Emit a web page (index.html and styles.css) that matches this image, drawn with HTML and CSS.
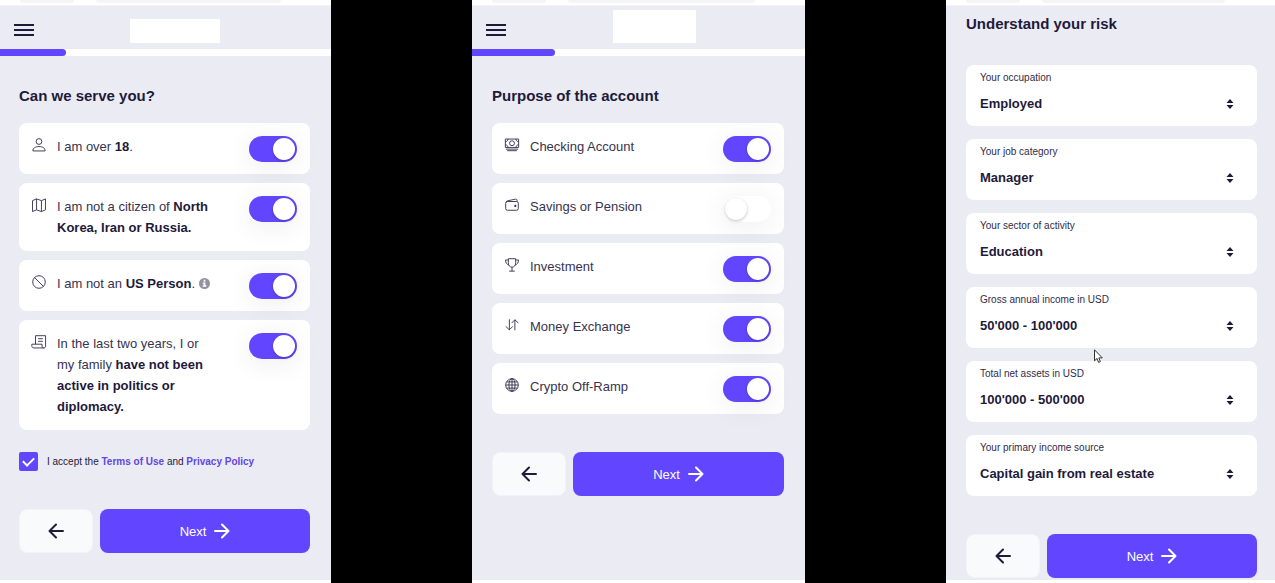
FILE: index.html
```html
<!DOCTYPE html>
<html lang="en">
<head>
  <meta charset="UTF-8">
  <title>Account onboarding</title>
  <link rel="stylesheet" href="styles.css">
</head>
<body>
  <!-- shared icons -->
  <svg class="sprite" aria-hidden="true">
    <symbol id="arrow-left" viewBox="0 0 16 16"><path d="M15 8H1.500M8 1.500 1.500 8 8 14.500"/></symbol>
    <symbol id="arrow-right" viewBox="0 0 16 16"><path d="M1 8h13.500M8 1.500 14.500 8 8 14.500"/></symbol>
    <symbol id="menu" viewBox="0 0 20 14"><path d="M0 2h20M0 7h20M0 12h20"/></symbol>
    <symbol id="sort" viewBox="0 0 8 10"><path d="M4 0 7.500 4H.5zM4 10 .5 6h7z"/></symbol>
  </svg>

  <div class="screens">
    <form class="screen" id="eligibility">
      <div class="browser-bar"><span class="tab"></span><span class="address"></span></div>
      <header class="header">
        <button type="button" class="menu" aria-label="Menu"><svg><use href="#menu"/></svg></button>
        <div class="logo"></div>
      </header>
      <div class="progress"><div class="progress-bar" style="width: 20%"></div></div>

      <main class="content">
        <h2>Can we serve you?</h2>
        <div class="options">
          <div class="option">
            <svg class="icon" viewBox="0 0 16 16"><circle cx="8" cy="4" r="3.300"/><path d="M1 14.800c0-3.500 3-5 7-5s7 1.500 7 5z"/></svg>
            <label for="over18">I am over <b>18</b>.</label>
            <input type="checkbox" class="toggle" id="over18" checked>
          </div>
          <div class="option">
            <svg class="icon" viewBox="0 0 16 16"><path d="M.6 3 5.200 1l5.600 2 4.600-2v12.500l-4.600 2-5.600-2-4.600 2zM5.200 1v12.500M10.800 3v12.500"/></svg>
            <label for="citizen">I am not a citizen of <b>North Korea, Iran or Russia.</b></label>
            <input type="checkbox" class="toggle" id="citizen" checked>
          </div>
          <div class="option">
            <svg class="icon" viewBox="0 0 16 16"><circle cx="8" cy="8" r="7.200"/><path d="m3 3 10 10"/></svg>
            <label for="usPerson">I am not an <b>US Person</b>.
              <svg class="info" viewBox="0 0 12 12"><circle cx="6" cy="6" r="6"/><path d="M5 2h2v2H5zM4 5h3v3h1v1.500H4V8h1V6.300H4z"/></svg>
            </label>
            <input type="checkbox" class="toggle" id="usPerson" checked>
          </div>
          <div class="option">
            <svg class="icon" viewBox="0 0 16 16"><path d="M4 10.500V.8h11.500v12c0 1.300-.9 2-2 2s-2-.7-2-2v-2.300H-.2v1.800c0 1.500.9 2.500 2.300 2.500h11.400M7 4.200h5.500M7 7.200h5.500"/></svg>
            <label for="politics">In the last two years, I or my family <b>have not been active in politics or diplomacy.</b></label>
            <input type="checkbox" class="toggle" id="politics" checked>
          </div>
        </div>

        <div class="terms">
          <input type="checkbox" id="accept" checked>
          <label for="accept">I accept the <a href="#terms">Terms of Use</a> and <a href="#privacy">Privacy Policy</a></label>
        </div>

        <div class="actions">
          <button type="button" class="back" aria-label="Back"><svg><use href="#arrow-left"/></svg></button>
          <button type="submit" class="next">Next <svg><use href="#arrow-right"/></svg></button>
        </div>
      </main>
    </form>

    <form class="screen" id="purpose">
      <div class="browser-bar"><span class="tab"></span><span class="address"></span></div>
      <header class="header">
        <button type="button" class="menu" aria-label="Menu"><svg><use href="#menu"/></svg></button>
        <div class="logo logo-tall"></div>
      </header>
      <div class="progress"><div class="progress-bar" style="width: 25%"></div></div>

      <main class="content">
        <h2>Purpose of the account</h2>
        <div class="options">
          <div class="option">
            <svg class="icon" viewBox="0 0 16 16"><path d="M.4 1.200h15.200v9.600H.4zM1 12.700h14M2.500 14.500h11"/><circle cx="8" cy="6" r="2.800"/><path d="M.4 4.200c1.800 0 3-1.200 3-3M15.600 4.200c-1.800 0-3-1.200-3-3M.4 7.800c1.800 0 3 1.200 3 3M15.600 7.800c-1.800 0-3 1.200-3 3"/></svg>
            <label for="checking">Checking Account</label>
            <input type="checkbox" class="toggle" id="checking" checked>
          </div>
          <div class="option">
            <svg class="icon" viewBox="0 0 16 16"><rect x=".8" y="4" width="14.400" height="10" rx="2"/><path d="M1 5c.3-1 1-1.500 2-1.800l9-1.900c1-.2 1.800.4 1.800 1.400V4"/><circle class="dot" cx="11.800" cy="9" r="1.200"/></svg>
            <label for="savings">Savings or Pension</label>
            <input type="checkbox" class="toggle" id="savings">
          </div>
          <div class="option">
            <svg class="icon" viewBox="0 0 16 16"><path d="M3.800.8h8.400v4.700c0 3-1.800 5-4.200 5s-4.200-2-4.200-5zM3.800 2.300H.6c0 3 1.200 5 3.900 5.500M12.200 2.300h3.200c0 3-1.200 5-3.900 5.500M8 10.500V15M4.800 15h6.400"/></svg>
            <label for="investment">Investment</label>
            <input type="checkbox" class="toggle" id="investment" checked>
          </div>
          <div class="option">
            <svg class="icon" viewBox="0 0 16 16"><path d="M5 1.500v12M.8 9.500 5 13.500l4-4M11.300 14V2M7.500 5.800 11.300 2l4 3.800"/></svg>
            <label for="exchange">Money Exchange</label>
            <input type="checkbox" class="toggle" id="exchange" checked>
          </div>
          <div class="option">
            <svg class="icon" viewBox="0 0 16 16"><circle cx="8" cy="8" r="7.200"/><ellipse cx="8" cy="8" rx="3.500" ry="7.200"/><path d="M8 .8v14.400M.8 8h14.400M1.800 4.500h12.400M1.800 11.500h12.400"/></svg>
            <label for="crypto">Crypto Off-Ramp</label>
            <input type="checkbox" class="toggle" id="crypto" checked>
          </div>
        </div>

        <div class="actions">
          <button type="button" class="back" aria-label="Back"><svg><use href="#arrow-left"/></svg></button>
          <button type="submit" class="next">Next <svg><use href="#arrow-right"/></svg></button>
        </div>
      </main>
    </form>

    <form class="screen" id="risk">
      <div class="browser-bar"><span class="tab"></span><span class="address"></span></div>
      <main class="content content-scrolled">
        <h2>Understand your risk</h2>
        <div class="fields">
          <div class="field">
            <label for="occupation">Your occupation</label>
            <select id="occupation"><option>Employed</option></select>
            <svg class="sort"><use href="#sort"/></svg>
          </div>
          <div class="field">
            <label for="category">Your job category</label>
            <select id="category"><option>Manager</option></select>
            <svg class="sort"><use href="#sort"/></svg>
          </div>
          <div class="field">
            <label for="sector">Your sector of activity</label>
            <select id="sector"><option>Education</option></select>
            <svg class="sort"><use href="#sort"/></svg>
          </div>
          <div class="field">
            <label for="income">Gross annual income in USD</label>
            <select id="income"><option>50'000 - 100'000</option></select>
            <svg class="sort"><use href="#sort"/></svg>
            <svg class="cursor" viewBox="0 0 9 14"><path d="M.5.8v11l2.500-2.300 1.600 3.900 1.800-.8-1.600-3.700h3.500z"/></svg>
          </div>
          <div class="field">
            <label for="assets">Total net assets in USD</label>
            <select id="assets"><option>100'000 - 500'000</option></select>
            <svg class="sort"><use href="#sort"/></svg>
          </div>
          <div class="field">
            <label for="source">Your primary income source</label>
            <select id="source"><option>Capital gain from real estate</option></select>
            <svg class="sort"><use href="#sort"/></svg>
          </div>
        </div>

        <div class="actions">
          <button type="button" class="back" aria-label="Back"><svg><use href="#arrow-left"/></svg></button>
          <button type="submit" class="next">Next <svg><use href="#arrow-right"/></svg></button>
        </div>
      </main>
    </form>
  </div>
</body>
</html>
```
FILE: styles.css
```css
* {
  box-sizing: border-box;
}
body {
  margin: 0;
  background: #000;
  color: #1e1a3a;
  font-family: "Liberation Sans", Arial, sans-serif;
  font-size: 13px;
}
button, input, select {
  margin: 0;
  padding: 0;
  border: none;
  color: inherit;
  font: inherit;
}
svg {
  display: block;
  fill: none;
  stroke: currentColor;
}
.sprite {
  position: absolute;
  width: 0;
  height: 0;
}
.screens {
  display: grid;
  grid-template-columns: 331fr 333fr 329fr;
  column-gap: 141px;
  min-height: 100vh;
}
.screen {
  background: #ebebf4;
  border-bottom: 3px solid #fff;
}

/* bottom edge of the phone browser */
.browser-bar {
  display: flex;
  gap: 22px;
  height: 6px;
  padding: 0 50px 0 20px;
  background: #fff;
  border-bottom: 1px solid #f4f4f8;
}
.tab, .address {
  height: 3px;
  background: #f5f5f7;
  border-radius: 0 0 6px 6px;
}
.tab {
  width: 54px;
}
.address {
  flex: 1;
}

.header {
  display: flex;
  align-items: flex-end;
  height: 43px;
  padding: 0 14px 6px;
}
.menu {
  display: flex;
  align-items: center;
  height: 27px;
  background: none;
  cursor: pointer;
}
.menu svg {
  width: 20px;
  height: 14px;
  stroke-width: 2;
}
.logo {
  width: 90px;
  height: 24px;
  margin-left: 96px;
  background: #fff;
}
.logo-tall {
  width: 83px;
  height: 33px;
  margin-left: 107px;
}
.progress {
  height: 7px;
  background: #fff;
}
.progress-bar {
  height: 7px;
  background: #6246ff;
  border-radius: 0 4px 4px 0;
}

.content {
  padding: 30px 21px 0 19px;
}
#purpose .content {
  padding-left: 20px;
}
h2 {
  margin: 0 0 17px;
  font-size: 15px;
  line-height: 20px;
}
.options {
  display: flex;
  flex-direction: column;
  gap: 9px;
}
.option {
  display: flex;
  align-items: flex-start;
  padding: 13px 13px 12px;
  background: #fff;
  border-radius: 8px;
}
.icon {
  flex: none;
  width: 14px;
  height: 14px;
  margin: 2px 11px 0 0;
  overflow: visible;
  color: #2c2846;
}
.icon .dot {
  fill: currentColor;
  stroke: none;
}
.option label {
  flex: 1;
  margin-right: 33px;
  padding-bottom: 1px;
  line-height: 21px;
  color: #37334f;
}
.option b {
  color: #1e1a3a;
}
.info {
  display: inline-block;
  width: 11px;
  height: 11px;
  vertical-align: -1px;
  stroke: none;
}
.info circle {
  fill: #93919f;
}
.info path {
  fill: #fff;
}

.toggle {
  flex: none;
  appearance: none;
  width: 48px;
  height: 26px;
  padding: 2px;
  background: #fff;
  border-radius: 13px;
  box-shadow: 0 4px 28px rgba(30, 30, 30, 0.08);
  cursor: pointer;
}
.toggle::before {
  content: "";
  display: block;
  width: 22px;
  height: 22px;
  background: #fff;
  border-radius: 50%;
  box-shadow: 0 1px 3px rgba(0, 0, 0, 0.25);
}
.toggle:checked {
  background: #6246ff;
}
.toggle:checked::before {
  margin-left: auto;
}

.terms {
  display: flex;
  align-items: center;
  gap: 9px;
  margin-top: 22px;
  font-size: 10px;
}
.terms input {
  display: grid;
  place-items: center;
  appearance: none;
  width: 19px;
  height: 19px;
  background: #6246ff;
  border-radius: 2px;
}
.terms input:checked::before {
  content: "";
  width: 9px;
  height: 5px;
  margin-bottom: 3px;
  border: solid #fff;
  border-width: 0 0 2px 2px;
  rotate: -45deg;
}
.terms a {
  color: #6246e0;
  font-weight: bold;
  text-decoration: none;
}

.actions {
  display: flex;
  gap: 7px;
  margin-top: 38px;
}
.actions button {
  display: flex;
  align-items: center;
  justify-content: center;
  gap: 8px;
  height: 44px;
  border-radius: 8px;
  cursor: pointer;
}
.actions svg {
  width: 16px;
  height: 16px;
  stroke-width: 2;
  stroke-linecap: round;
  stroke-linejoin: round;
}
.actions .back {
  width: 74px;
  background: #f9fafb;
  border: 1px solid #f2f2f7;
}
.actions .next {
  flex: 1;
  background: #6246ff;
  color: #fff;
}

.content-scrolled {
  padding: 8px 18px 0 20px;
}
.content-scrolled h2 {
  margin-bottom: 31px;
}
.fields {
  display: flex;
  flex-direction: column;
  gap: 13px;
}
.field {
  position: relative;
  display: grid;
  align-items: center;
  height: 61px;
  padding: 5px 0 3px;
  grid-template-rows: 14px 1fr;
  background: #fff;
  border-radius: 8px;
}
.field label {
  padding-left: 14px;
  font-size: 10px;
  color: #302c4a;
}
.field select {
  grid-area: 2 / 1;
  appearance: none;
  width: 100%;
  height: 32px;
  padding: 0 40px 0 14px;
  background: none;
  font-weight: bold;
}
.sort {
  grid-area: 2 / 1;
  justify-self: end;
  width: 8px;
  height: 10px;
  margin-right: 23px;
  fill: currentColor;
  stroke: none;
  pointer-events: none;
}
.cursor {
  position: absolute;
  left: 128px;
  top: 62px;
  z-index: 1;
  width: 9px;
  height: 14px;
  fill: #fff;
  stroke: #333;
}
```
